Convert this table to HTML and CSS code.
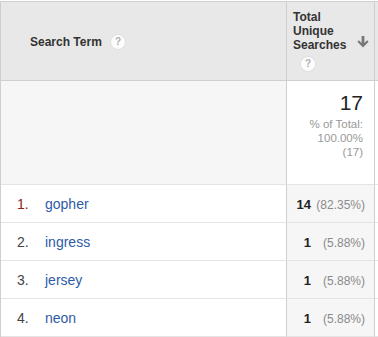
FILE: index.html
```html
<!DOCTYPE html>
<html>
<head>
<meta charset="utf-8">
<link rel="stylesheet" href="styles.css">
</head>
<body>
<table class="report">
  <colgroup>
    <col class="c-term">
    <col class="c-total">
    <col class="c-extra">
  </colgroup>
  <thead>
    <tr class="head-row">
      <th class="h-term">
        <span class="h-label">Search Term</span>
        <span class="help">?</span>
      </th>
      <th class="h-metric">
        <div class="h-metric-inner">
          <div class="h-metric-text">
            <div class="h-label">Total<br>Unique<br>Searches</div>
            <span class="help help-below">?</span>
          </div>
          <svg class="sort-arrow" width="12" height="12" viewBox="0 0 12 12" aria-hidden="true">
            <path d="M4.6 0h2.8v7l2.7-2.7 1.5 1.5L6 11.4 0.4 5.8l1.5-1.5 2.7 2.7z" fill="#787878"/>
          </svg>
        </div>
      </th>
      <th class="h-extra"></th>
    </tr>
  </thead>
  <tbody>
    <tr class="total-row">
      <td class="t-term"></td>
      <td class="t-metric">
        <div class="t-big">17</div>
        <div class="t-sub">% of Total:<br>100.00%<br>(17)</div>
      </td>
      <td class="t-extra"></td>
    </tr>
    <tr class="data-row">
      <td class="d-term"><span class="rank rank-first">1.</span><a class="term">gopher</a></td>
      <td class="d-metric"><span class="num">14</span><span class="pct">(82.35%)</span></td>
      <td class="d-extra"></td>
    </tr>
    <tr class="data-row">
      <td class="d-term"><span class="rank">2.</span><a class="term">ingress</a></td>
      <td class="d-metric"><span class="num">1</span><span class="pct">(5.88%)</span></td>
      <td class="d-extra"></td>
    </tr>
    <tr class="data-row">
      <td class="d-term"><span class="rank">3.</span><a class="term">jersey</a></td>
      <td class="d-metric"><span class="num">1</span><span class="pct">(5.88%)</span></td>
      <td class="d-extra"></td>
    </tr>
    <tr class="data-row">
      <td class="d-term"><span class="rank">4.</span><a class="term">neon</a></td>
      <td class="d-metric"><span class="num">1</span><span class="pct">(5.88%)</span></td>
      <td class="d-extra"></td>
    </tr>
  </tbody>
</table>
</body>
</html>
```

FILE: styles.css
```css
html, body {
  margin: 0;
  padding: 0;
  background: #ffffff;
  overflow: hidden;
}

body {
  font-family: "Liberation Sans", Arial, sans-serif;
  color: #333333;
}

.report {
  margin-top: 1px;
  border-collapse: separate;
  border-spacing: 0;
  table-layout: fixed;
  width: 378px;
  border-top: 1px solid #cfcfcf;
  border-left: 1px solid #cfcfcf;
}

.c-term { width: 286px; }
.c-total { width: 88px; }
.c-extra { width: 3px; }

.report th,
.report td {
  padding: 0;
  box-sizing: border-box;
}

.head-row th {
  height: 79px;
  background: #e8e8e8;
  border-bottom: 1px solid #cfcfcf;
  text-align: left;
  font-weight: bold;
  font-size: 12px;
  color: #333333;
}

.h-term {
  border-right: 1px solid #cfcfcf;
  vertical-align: middle;
  padding: 2px 0 0 29px !important;
}

.h-label {
  line-height: 14px;
  color: #333333;
}

.help {
  display: inline-block;
  width: 14px;
  height: 14px;
  border-radius: 50%;
  background: #fcfcfc;
  color: #b0b0b0;
  font-size: 10px;
  font-weight: bold;
  line-height: 14px;
  text-align: center;
  vertical-align: middle;
  margin-left: 6px;
  margin-top: -2px;
  box-shadow: 0 0 0 1px #e0e0e0;
}

.help-below {
  margin: 5px 0 0 8px;
  display: block;
}

.h-metric {
  border-right: 1px solid #cfcfcf;
  vertical-align: top;
  padding: 8px 5px 0 6px !important;
}

.h-metric-inner {
  display: flex;
  justify-content: space-between;
}

.sort-arrow {
  margin-top: 26px;
  flex: none;
}

.total-row td {
  height: 104px;
  border-bottom: 1px solid #e4e4e4;
  vertical-align: top;
}

.t-term {
  background: #f6f6f6;
  border-right: 1px solid #cfcfcf;
}

.t-metric {
  background: #ffffff;
  border-right: 1px solid #cfcfcf;
  text-align: right;
  padding: 10px 11px 0 0 !important;
}

.t-big {
  font-size: 21px;
  line-height: 24px;
  color: #222222;
}

.t-sub {
  margin-top: 2px;
  font-size: 11.5px;
  line-height: 14px;
  color: #999999;
}

.data-row td {
  height: 38px;
  border-bottom: 1px solid #e4e4e4;
  vertical-align: middle;
}

.d-term {
  background: #ffffff;
  border-right: 1px solid #cfcfcf;
  padding-left: 16px !important;
  font-size: 14px;
}

.rank {
  display: inline-block;
  width: 28px;
  color: #444444;
}

.rank-first {
  color: #8b2418;
}

.term {
  color: #2e5ba6;
  text-decoration: none;
}

.d-metric {
  background: #f6f6f6;
  border-right: 1px solid #cfcfcf;
  text-align: right;
  padding-right: 9px !important;
  white-space: nowrap;
}

.num {
  font-size: 13px;
  font-weight: bold;
  color: #222222;
}

.pct {
  display: inline-block;
  width: 54px;
  text-align: right;
  font-size: 12px;
  color: #8a8a8a;
}
```
